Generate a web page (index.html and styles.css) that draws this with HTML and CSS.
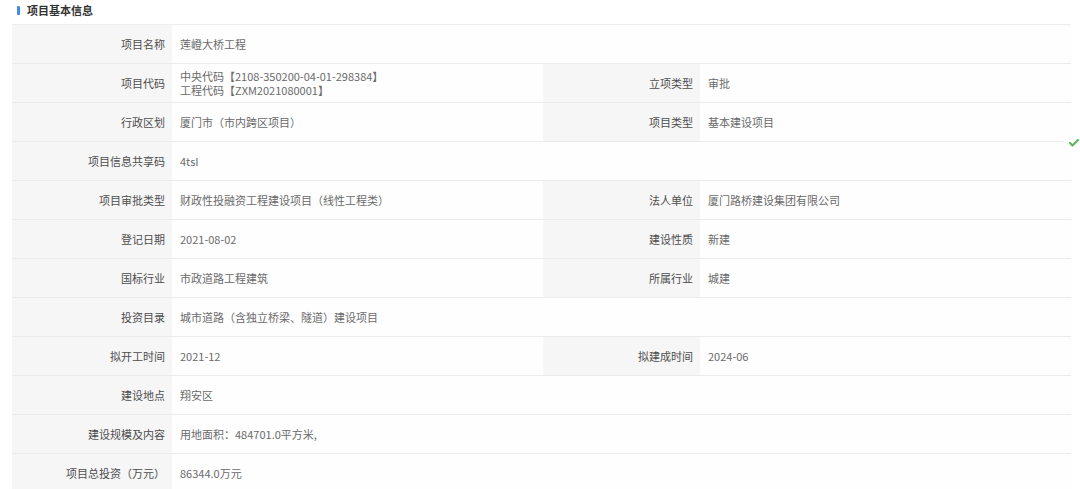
FILE: index.html
```html
<!DOCTYPE html>
<html lang="zh-CN">
<head>
<meta charset="utf-8">
<title>项目基本信息</title>
<link rel="stylesheet" href="styles.css">
</head>
<body>
<div class="page">
  <h2 class="section-title"><span class="bar"></span>项目基本信息</h2>
  <div class="info-grid">
    <div class="lbl">项目名称</div><div class="val span3">莲嶝大桥工程</div>

    <div class="lbl">项目代码</div><div class="val multi"><span>中央代码【2108-350200-04-01-298384】</span><span>工程代码【ZXM2021080001】</span></div>
    <div class="lbl">立项类型</div><div class="val">审批</div>

    <div class="lbl">行政区划</div><div class="val">厦门市（市内跨区项目）</div>
    <div class="lbl">项目类型</div><div class="val">基本建设项目</div>

    <div class="lbl">项目信息共享码</div><div class="val span3">4tsI</div>

    <div class="lbl">项目审批类型</div><div class="val">财政性投融资工程建设项目（线性工程类）</div>
    <div class="lbl">法人单位</div><div class="val">厦门路桥建设集团有限公司</div>

    <div class="lbl">登记日期</div><div class="val">2021-08-02</div>
    <div class="lbl">建设性质</div><div class="val">新建</div>

    <div class="lbl">国标行业</div><div class="val">市政道路工程建筑</div>
    <div class="lbl">所属行业</div><div class="val">城建</div>

    <div class="lbl">投资目录</div><div class="val span3">城市道路（含独立桥梁、隧道）建设项目</div>

    <div class="lbl">拟开工时间</div><div class="val">2021-12</div>
    <div class="lbl">拟建成时间</div><div class="val">2024-06</div>

    <div class="lbl">建设地点</div><div class="val span3">翔安区</div>

    <div class="lbl">建设规模及内容</div><div class="val span3">用地面积：484701.0平方米,</div>

    <div class="lbl">项目总投资（万元）</div><div class="val span3">86344.0万元</div>
  </div>
  <div class="float-check">
    <svg width="10" height="8" viewBox="0 0 10 8"><path d="M1 4 L3.5 6.5 L9 1" fill="none" stroke="#5cb85c" stroke-width="2.2" stroke-linecap="round" stroke-linejoin="round"/></svg>
  </div>
</div>
</body>
</html>
```
FILE: styles.css
```css
* { box-sizing: border-box; }
html, body { margin: 0; padding: 0; background: #ffffff; }
body {
  font-family: "Microsoft YaHei", "Noto Sans CJK SC", "Noto Sans", sans-serif;
  font-size: 11px;
  color: #555;
  overflow: hidden;
}
.page {
  position: relative;
  padding: 3px 9px 0 12px;
}
.section-title {
  margin: 0 0 7px 5px;
  height: 14px;
  display: flex;
  align-items: center;
  gap: 7px;
  font-size: 11px;
  font-weight: bold;
  color: #333;
  line-height: 14px;
}
.section-title .bar {
  display: inline-block;
  width: 3px;
  height: 9px;
  background: #3d8fe0;
  border-radius: 1px;
}
.info-grid {
  display: grid;
  grid-template-columns: 160px 371px 157px 371px;
  grid-auto-rows: 39px;
  border-top: 1px solid #ededed;
  border-right: 1px solid #ededed;
  width: 1059px;
}
.lbl, .val {
  display: flex;
  align-items: center;
  border-bottom: 1px solid #ebebeb;
  white-space: nowrap;
}
.lbl {
  justify-content: flex-end;
  padding-right: 7px;
  background: #f6f6f6;
  color: #4d4d4d;
}
.val {
  padding-left: 8px;
  background: #fefefe;
  color: #6a6a6a;
}
.val.span3 { grid-column: span 3; }
.val.multi {
  flex-direction: column;
  align-items: flex-start;
  justify-content: center;
  line-height: 14px;
}
.float-check {
  position: absolute;
  left: 1064px;
  top: 134px;
  width: 20px;
  height: 18px;
  border-radius: 9px;
  background: #fff;
  display: flex;
  align-items: center;
  justify-content: center;
}
```
